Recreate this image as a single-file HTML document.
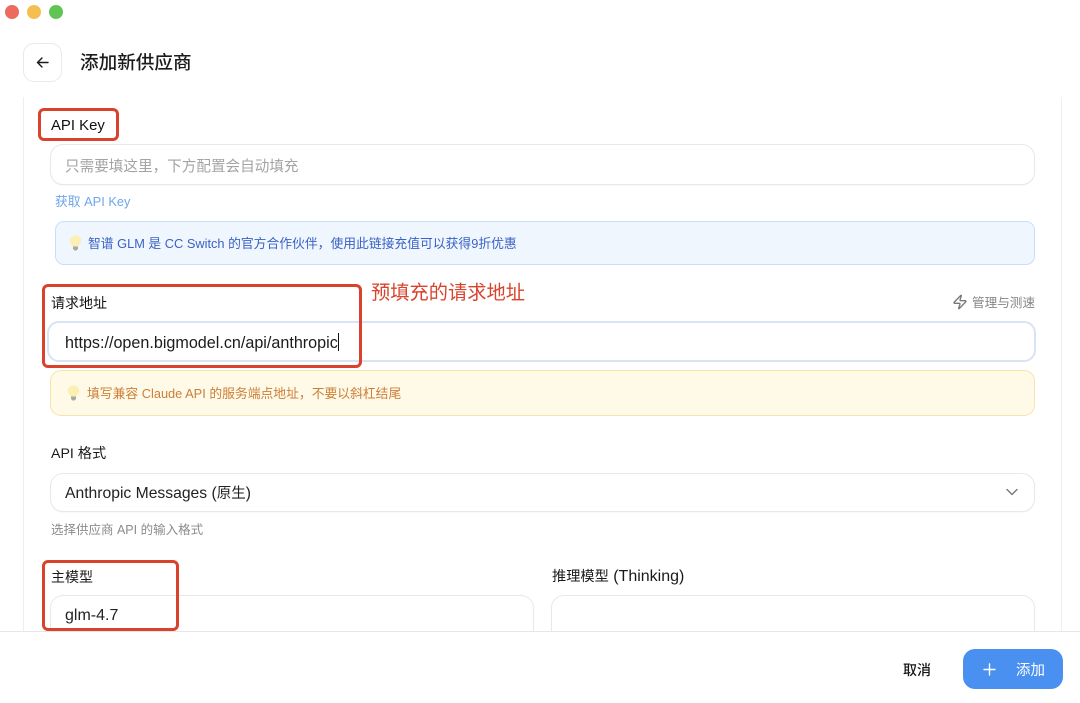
<!DOCTYPE html>
<html lang="zh">
<head>
<meta charset="utf-8">
<style>
html,body{margin:0;padding:0;background:#fff}
body{width:1080px;height:703px;position:relative;overflow:hidden;font-family:"Liberation Sans","Noto Sans CJK SC",sans-serif;color:#1a1a1a}
.a{position:absolute;white-space:nowrap;box-sizing:border-box}
.t{line-height:20px;height:20px}
.box{background:#fff;border:1px solid #e8e8ea;border-radius:13px;box-shadow:0 1px 1px rgba(0,0,0,.03)}
.red{border:3px solid #d9432c;border-radius:6px}
svg{position:absolute;overflow:visible}
</style>
</head>
<body>
<div class="a" style="left:5px;top:5px;width:14px;height:14px;border-radius:50%;background:#ec6a5e"></div>
<div class="a" style="left:27px;top:5px;width:14px;height:14px;border-radius:50%;background:#f4bf4f"></div>
<div class="a" style="left:49px;top:5px;width:14px;height:14px;border-radius:50%;background:#61c554"></div>

<div class="a" style="left:23px;top:43px;width:39px;height:39px;border:1px solid #e9e9eb;border-radius:11px;background:#fff"></div>
<svg style="left:35px;top:55px" width="15" height="15" viewBox="0 0 15 15" fill="none" stroke="#1a1a1a" stroke-width="1.4" stroke-linecap="round" stroke-linejoin="round"><path d="M13 7.500H2.500M7 3L2.500 7.500L7 12"/></svg>
<div class="a t" style="left:80px;top:52.500px;font-size:18.600px;font-weight:500;color:#1c1c1c">添加新供应商</div>

<div class="a" style="left:23px;top:97px;width:1px;height:534px;background:#eeeeef"></div>
<div class="a" style="left:1061px;top:97px;width:1px;height:534px;background:#eeeeef"></div>

<div class="a t" style="left:51px;top:116px;font-size:14.900px;color:#111">API Key</div>
<div class="a box" style="left:50px;top:144px;width:985px;height:41px"></div>
<div class="a t" style="left:65px;top:157px;font-size:14.600px;color:#a3a3a6">只需要填这里，下方配置会自动填充</div>
<div class="a t" style="left:55px;top:192px;font-size:12.800px;color:#6ea5ec">获取 API Key</div>

<div class="a" style="left:55px;top:221px;width:980px;height:44px;background:#eff6fe;border:1px solid #c9dff7;border-radius:9px"></div>
<svg style="left:69px;top:235px" width="13" height="16" viewBox="0 0 13 16"><path d="M6.500 0.500C3 0.500 0.800 2.900 0.800 5.700C0.800 8 2.500 9 3.800 11.500H9.200C10.500 9 12.200 8 12.200 5.700C12.200 2.900 10 0.500 6.500 0.500Z" fill="#fbefb4"/><path d="M4 11.500H9V14L7.500 15.500H5.500L4 14Z" fill="#a9a9a4"/></svg>
<div class="a t" style="left:88px;top:233.500px;font-size:12.800px;color:#3a62c4">智谱 GLM 是 CC Switch 的官方合作伙伴，使用此链接充值可以获得9折优惠</div>

<div class="a t" style="left:51px;top:293px;font-size:14px;color:#111">请求地址</div>
<svg style="left:952px;top:294px" width="16" height="16" viewBox="0 0 24 24" fill="none" stroke="#777" stroke-width="2" stroke-linejoin="round" stroke-linecap="round"><path d="M4 14a1 1 0 0 1-.78-1.630l9.900-10.200a.5.5 0 0 1 .86.460l-1.920 6.020A1 1 0 0 0 13 10h7a1 1 0 0 1 .78 1.630l-9.900 10.200a.5.5 0 0 1-.86-.46l1.920-6.020A1 1 0 0 0 11 14z"/></svg>
<div class="a t" style="left:972px;top:293px;font-size:12.600px;color:#85858a">管理与测速</div>

<div class="a" style="left:47px;top:321px;width:989px;height:41px;background:#fff;border:2px solid #d8e3f5;border-radius:12px"></div>
<div class="a t" style="left:65px;top:332.500px;font-size:16.150px;color:#1c1c1c">https://open.bigmodel.cn/api/anthropic</div>
<div class="a" style="left:338px;top:333px;width:1px;height:18px;background:#111"></div>

<div class="a" style="left:50px;top:370px;width:985px;height:46px;background:#fff9e8;border:1px solid #f8e3ab;border-radius:11px"></div>
<svg style="left:67px;top:385px" width="13" height="16" viewBox="0 0 13 16"><path d="M6.500 0.500C3 0.500 0.800 2.900 0.800 5.700C0.800 8 2.500 9 3.800 11.500H9.200C10.500 9 12.200 8 12.200 5.700C12.200 2.900 10 0.500 6.500 0.500Z" fill="#fbefb4"/><path d="M4 11.500H9V14L7.500 15.500H5.500L4 14Z" fill="#a9a9a4"/></svg>
<div class="a t" style="left:87px;top:383.500px;font-size:12.800px;color:#cb7f36">填写兼容 Claude API 的服务端点地址，不要以斜杠结尾</div>

<div class="a t" style="left:51px;top:444px;font-size:14.200px">API 格式</div>
<div class="a box" style="left:50px;top:473px;width:985px;height:39px"></div>
<div class="a t" style="left:65px;top:484px;font-size:15.700px;color:#222">Anthropic Messages (<span style="font-size:14.500px">原生</span>)</div>
<svg style="left:1006px;top:488px" width="12" height="8" viewBox="0 0 12 8" fill="none" stroke="#777" stroke-width="1.4" stroke-linecap="round" stroke-linejoin="round"><path d="M1 1.500L6 6.500L11 1.500"/></svg>
<div class="a t" style="left:51px;top:520px;font-size:12.500px;color:#8b8b8f">选择供应商 API 的输入格式</div>

<div class="a t" style="left:51px;top:567px;font-size:14px">主模型</div>
<div class="a t" style="left:552px;top:567px;font-size:14.200px">推理模型<span style="font-size:16px"> (Thinking)</span></div>
<div class="a box" style="left:50px;top:595px;width:484px;height:60px"></div>
<div class="a box" style="left:551px;top:595px;width:484px;height:60px"></div>
<div class="a t" style="left:65px;top:605.500px;font-size:16px;color:#222">glm-4.7</div>

<div class="a" style="left:0;top:631px;width:1080px;height:72px;background:#fff;border-top:1px solid #e6e6e8"></div>
<div class="a t" style="left:903px;top:660px;font-size:14px;font-weight:500;color:#161616">取消</div>
<div class="a" style="left:963px;top:649px;width:100px;height:40px;background:#4a90f0;border-radius:12px"></div>
<svg style="left:983px;top:663px" width="13" height="13" viewBox="0 0 13 13" fill="none" stroke="#fff" stroke-width="1.4" stroke-linecap="round"><path d="M6.500 1V12M1 6.500H12"/></svg>
<div class="a t" style="left:1016px;top:661px;font-size:14.500px;color:#fff">添加</div>

<div class="a red" style="left:38px;top:108px;width:81px;height:33px"></div>
<div class="a red" style="left:42px;top:284px;width:320px;height:84px"></div>
<div class="a red" style="left:42px;top:560px;width:137px;height:71px"></div>
<div class="a t" style="left:371px;top:284px;font-size:19.250px;color:#d9432c">预填充的请求地址</div>
</body>
</html>
